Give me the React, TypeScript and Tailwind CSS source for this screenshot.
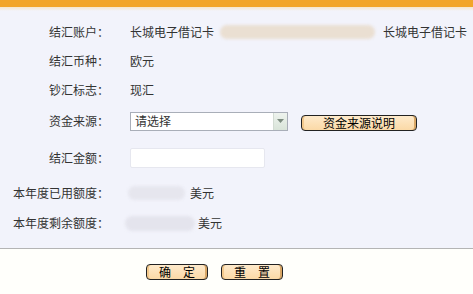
import React from 'react';

const font = { fontFamily: '"Noto Sans CJK SC", "Noto Sans", sans-serif' };

const Row = ({ label, h, children }: { label: string; h: string; children?: React.ReactNode }) => (
  <div className={`flex items-center ${h}`}>
    <div className="w-[109px] shrink-0 text-right whitespace-nowrap">{label}</div>
    <div className="ml-[21px] flex items-center">{children}</div>
  </div>
);

const PeachButton = ({ children, className }: { children: React.ReactNode; className: string }) => (
  <button
    className={`flex items-center justify-center rounded-[4px] border border-[#222] bg-gradient-to-b from-[#feeacb] to-[#fbd9a6] text-[12px] leading-none text-black shadow-[inset_-2px_0_0_#d9a766,inset_2px_0_0_#f3c98c] ${className}`}
  >
    {children}
  </button>
);

export default function App() {
  return (
    <div className="w-[473px] h-[294px] overflow-hidden bg-[#fffffb] text-[12px] text-[#333]" style={font}>
      {/* top bar */}
      <div className="h-[7px] bg-[#f2a52a]" />
      <div className="bg-gradient-to-b from-[#f6e6cc] via-[#f2f3fb] to-[#f2f3fb] pt-[10px] pb-[3px] bg-[length:100%_8px] bg-no-repeat bg-[#f2f3fb]">
        <Row label="结汇账户：" h="h-[29px]">
          <span>长城电子借记卡</span>
          <span className="ml-[6px] h-[14px] w-[155px] rounded-full bg-[#eadfd2] blur-[1.5px]" />
          <span className="ml-[8px]">长城电子借记卡</span>
        </Row>
        <Row label="结汇币种：" h="h-[29px]">
          <span>欧元</span>
        </Row>
        <Row label="钞汇标志：" h="h-[29px]">
          <span>现汇</span>
        </Row>
        <Row label="资金来源：" h="h-[34px]">
          <div className="flex h-[19px] w-[158px] items-center border border-[#a9aeb8] bg-white">
            <span className="flex-1 pl-[4px]">请选择</span>
            <span className="flex h-[17px] w-[14px] items-center justify-center border-l border-[#d3dcd3] bg-gradient-to-b from-[#eef3ee] to-[#d9e4d9]">
              <svg width="7" height="4" viewBox="0 0 7 4">
                <path d="M0 0h7L3.5 4z" fill="#7d8c80" />
              </svg>
            </span>
          </div>
          <PeachButton className="ml-[13px] mt-[4px] h-[16px] w-[116px]">资金来源说明</PeachButton>
        </Row>
        <Row label="结汇金额：" h="h-[40px]">
          <div className="h-[20px] w-[135px] rounded-[2px] border border-[#e6e7ef] bg-white" />
        </Row>
        <Row label="本年度已用额度：" h="h-[30px]">
          <span className="-ml-[2px] h-[14px] w-[57px] rounded-full bg-[#e6e6ee] blur-[1.5px]" />
          <span className="ml-[5px]">美元</span>
        </Row>
        <Row label="本年度剩余额度：" h="h-[30px]">
          <span className="-ml-[5px] h-[15px] w-[70px] rounded-full bg-[#e4e4ed] blur-[1.5px]" />
          <span className="ml-[3px]">美元</span>
        </Row>
        <div className="h-[7px]" />
      </div>
      <div className="h-[1px] bg-[#b4b4b4]" />
      <div className="flex gap-[13px] pl-[146px] pt-[15px]">
        <PeachButton className="h-[16px] w-[62px] tracking-[12px] pl-[12px]">确定</PeachButton>
        <PeachButton className="h-[16px] w-[62px] tracking-[12px] pl-[12px]">重置</PeachButton>
      </div>
    </div>
  );
}
